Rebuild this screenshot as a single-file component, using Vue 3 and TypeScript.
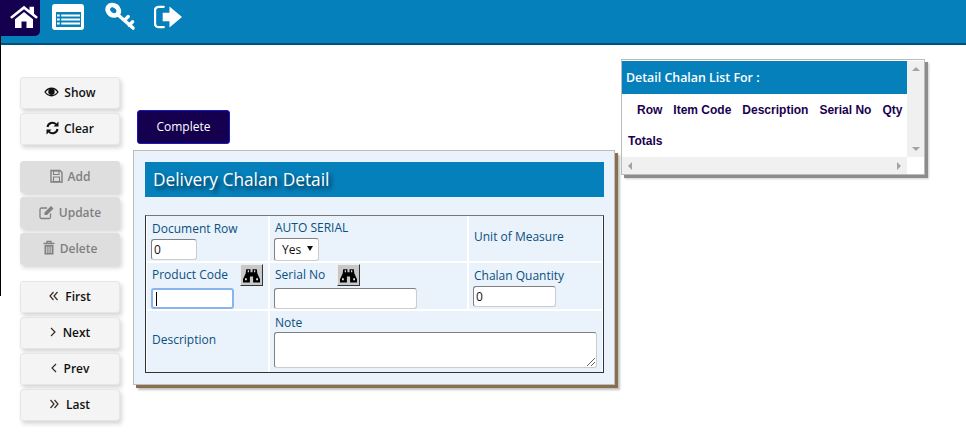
<template>
  <div class="app">
    <header class="topbar">
      <a class="nav-item home">
        <svg viewBox="0 0 30 26" width="30" height="24" preserveAspectRatio="none">
          <path d="M1 14 15 2l5.500 4.700V3h4.500v7.600L29 14l-1.800 2L15 5.600 2.800 16z" fill="#fff" />
          <path d="M6 16.500 15 8.800l9 7.700V26h-6.500v-7h-5v7H6z" fill="#fff" />
        </svg>
      </a>
      <a class="nav-item list">
        <svg viewBox="0 0 32 26" width="32" height="26">
          <rect x="0" y="0" width="32" height="26" rx="3" fill="#fff" />
          <rect x="4" y="8" width="25" height="15" fill="#0680bb" />
          <path d="M5 11.500h23M5 15.500h23M5 19.500h23" stroke="#fff" stroke-width="2" />
          <path d="M8.500 9v13" stroke="#0680bb" stroke-width="1.500" />
        </svg>
      </a>
      <a class="nav-item key">
        <svg viewBox="0 0 32 30" width="31" height="29">
          <ellipse cx="8.500" cy="8.500" rx="6" ry="5" transform="rotate(35 8.500 8.500)" fill="none" stroke="#fff" stroke-width="5" />
          <path d="M13 13 29 27M20 19l4-4M25 24l3.500-3.500" fill="none" stroke="#fff" stroke-width="3.500" stroke-linecap="round" />
        </svg>
      </a>
      <a class="nav-item exit">
        <svg viewBox="0 0 30 26" width="29" height="24" preserveAspectRatio="none">
          <path d="M10 2H5a4 4 0 0 0-4 4v14a4 4 0 0 0 4 4h5" fill="none" stroke="#fff" stroke-width="2.500" stroke-linecap="round" />
          <path d="M9 8.500h7V1.500L29 13 16 24.500v-7H9z" fill="#fff" />
        </svg>
      </a>
    </header>

    <div class="page">
      <aside class="sidebar">
        <div v-for="(group, i) in buttonGroups" :key="i" class="btn-group">
          <button
            v-for="btn in group"
            :key="btn.label"
            class="side-btn"
            :class="{ disabled: btn.disabled, pager: btn.pager }"
          >
            <svg
              :viewBox="`0 0 ${btn.w} 16`"
              :width="btn.w"
              height="16"
              class="side-icon"
              v-html="btn.icon"
            ></svg>
            <span>{{ btn.label }}</span>
          </button>
        </div>
      </aside>

      <main class="center">
        <button class="complete-btn">Complete</button>
        <section class="detail-panel">
          <h2 class="detail-title">Delivery Chalan Detail</h2>
          <div class="form-grid">
            <div class="cell">
              <label>Document Row</label>
              <input class="field doc-row" value="0" />
            </div>
            <div class="cell">
              <label class="tight">AUTO SERIAL</label>
              <div class="select-box">Yes <span class="caret"></span></div>
            </div>
            <div class="cell middle">
              <label>Unit of Measure</label>
            </div>

            <div class="cell row-two">
              <div class="label-row">
                <label>Product Code</label>
                <button class="search-btn">
                  <svg viewBox="0 0 16 14" width="17" height="15" v-html="binoculars"></svg>
                </button>
              </div>
              <div class="field product focused"><span class="cursor"></span></div>
            </div>
            <div class="cell row-two">
              <div class="label-row serial">
                <label>Serial No</label>
                <button class="search-btn">
                  <svg viewBox="0 0 16 14" width="17" height="15" v-html="binoculars"></svg>
                </button>
              </div>
              <input class="field serial-input" />
            </div>
            <div class="cell">
              <label>Chalan Quantity</label>
              <input class="field qty" value="0" />
            </div>

            <div class="cell middle">
              <label>Description</label>
            </div>
            <div class="cell note-cell">
              <label>Note</label>
              <div class="note-box">
                <svg class="grip" viewBox="0 0 9 9" width="9" height="9">
                  <path d="M1 9 9 1M5 9l4-4" stroke="#666" stroke-width="1" />
                </svg>
              </div>
            </div>
          </div>
        </section>
      </main>

      <section class="list-panel">
        <div class="list-view">
          <div class="list-body">
            <div class="list-title">Detail Chalan List For :</div>
            <div class="list-head">
              <span v-for="col in columns" :key="col">{{ col }}</span>
            </div>
            <div class="list-total">Totals</div>
          </div>
          <div class="vbar">
            <span class="arrow up"></span>
            <span class="arrow down"></span>
          </div>
        </div>
        <div class="hbar">
          <span class="arrow left"></span>
          <span class="arrow right"></span>
        </div>
      </section>
    </div>
  </div>
</template>

<script setup lang="ts">
interface SideButton {
  label: string
  icon: string
  w: number
  disabled?: boolean
  pager?: boolean
}

const chevron = (d: string) =>
  `<path d="${d}" fill="none" stroke="#3a2a20" stroke-width="1.200" />`

const buttonGroups: SideButton[][] = [
  [
    {
      label: 'Show',
      w: 15,
      icon: '<path d="M1 8c3.500-5 9.500-5 13 0-3.500 5-9.500 5-13 0z" fill="none" stroke="currentColor" stroke-width="1.300"/><circle cx="7.500" cy="7.800" r="3.200" fill="currentColor"/>'
    },
    {
      label: 'Clear',
      w: 13,
      icon: '<path d="M1.500 7A5 5 0 0 1 10 4.200M11.500 9A5 5 0 0 1 3 11.800" fill="none" stroke="currentColor" stroke-width="2"/><path d="M12.500 1.500v5h-5zM.500 14.500v-5h5z" fill="currentColor"/>'
    }
  ],
  [
    {
      label: 'Add',
      w: 13,
      disabled: true,
      icon: '<path d="M1 2.500h9l2 2v9.500H1z" fill="none" stroke="currentColor" stroke-width="1.400"/><path d="M3.500 3h5.500v3.500H3.500zM3.500 9h6v4.500h-6z" fill="none" stroke="currentColor" stroke-width="1.100"/>'
    },
    {
      label: 'Update',
      w: 15,
      disabled: true,
      icon: '<path d="M11.500 9.500V13a1.500 1.500 0 0 1-1.500 1.500H2.500A1.500 1.500 0 0 1 1 13V5.500A1.500 1.500 0 0 1 2.500 4h5.500" fill="none" stroke="currentColor" stroke-width="1.300"/><path d="M5.500 8.500 12 2l2.500 2.500L8 11H5.500z" fill="currentColor"/>'
    },
    {
      label: 'Delete',
      w: 12,
      disabled: true,
      icon: '<path d="M.500 3.500h11M4 3V1.500h4V3" fill="none" stroke="currentColor" stroke-width="1.300"/><path d="M1.500 5h9v9.500h-9z" fill="currentColor"/><path d="M3.800 6.500v6.500M6 6.500v6.500M8.200 6.500v6.500" stroke="#dedede" stroke-width="1"/>'
    }
  ],
  [
    { label: 'First', w: 9, pager: true, icon: chevron('M4.500 4 1 8l3.500 4M8.500 4 5 8l3.500 4') },
    { label: 'Next', w: 6, pager: true, icon: chevron('M1 4l4 4-4 4') },
    { label: 'Prev', w: 6, pager: true, icon: chevron('M5 4 1 8l4 4') },
    { label: 'Last', w: 9, pager: true, icon: chevron('M.500 4 4 8l-3.500 4M4.500 4 8 8l-3.500 4') }
  ]
]

const binoculars =
  '<path d="M3 1h4v3h2V1h4l.5 4 2.500 5.500v3h-6.500V8h-3v5.500H0v-3L2.500 5z" fill="#000"/><path d="M2 9.500h1.500v2H2zM12.500 9.500H14v2h-1.500zM4.500 2h1v2h-1zM10.500 2h1v2h-1z" fill="#fff"/>'

const columns = ['Row', 'Item Code', 'Description', 'Serial No', 'Qty']
</script>

<style>
html,
body {
  margin: 0;
  background: #fff;
  overflow: hidden;
}
</style>

<style scoped>
.app {
  position: relative;
  height: 445px;
  font-family: "Open Sans", "Noto Sans", sans-serif;
  font-size: 12px;
}

/* thin black line down the left edge */
.app::before {
  content: "";
  position: absolute;
  left: 0;
  top: 36px;
  width: 1px;
  height: 260px;
  background: #000;
}

.topbar {
  display: flex;
  align-items: flex-start;
  height: 43px;
  background: #0680bb;
  border-bottom: 2px solid #02507c;
}

.nav-item {
  display: flex;
  align-items: center;
  justify-content: center;
  box-sizing: border-box;
  height: 36px;
}

.home {
  position: relative;
  z-index: 1;
  width: 40px;
  justify-content: flex-end;
  padding: 0 1px 4px 0;
  background: #14004f;
  border-radius: 0 0 5px 0;
}

.list {
  margin-left: 12px;
  padding-bottom: 2px;
}

.key {
  margin-left: 21px;
  padding-bottom: 3px;
}

.exit {
  margin-left: 18px;
  padding-bottom: 3px;
}

.page {
  display: flex;
  align-items: flex-start;
  padding-left: 20px;
}

/* Sidebar */
.sidebar {
  display: flex;
  flex-direction: column;
  gap: 16px;
  width: 100px;
  padding-top: 32px;
}

.btn-group {
  display: flex;
  flex-direction: column;
  gap: 4px;
}

.side-btn {
  display: flex;
  align-items: center;
  justify-content: center;
  gap: 5px;
  box-sizing: border-box;
  width: 100px;
  height: 32px;
  padding: 0 0 2px;
  border: 1px solid #e6e6e6;
  border-radius: 3px;
  background: #f4f4f4;
  box-shadow: 2px 3px 4px rgba(0, 0, 0, 0.16);
  color: #111;
  font-family: inherit;
  font-size: 12px;
  font-weight: 600;
}

.side-btn.pager {
  gap: 7px;
}

.side-btn.disabled {
  background: #dedede;
  border-color: #dedede;
  color: #808080;
}

.side-icon {
  flex: none;
}

/* Center */
.center {
  width: 488px;
  margin-left: 13px;
  padding-top: 65px;
}

.complete-btn {
  display: block;
  width: 93px;
  height: 34px;
  margin-left: 4px;
  padding: 0 0 2px;
  border: 1px solid #1a17c8;
  border-radius: 3px;
  background: #14004f;
  color: #fff;
  font-family: inherit;
  font-size: 12px;
}

.detail-panel {
  box-sizing: border-box;
  width: 482px;
  height: 235px;
  margin-top: 6px;
  padding: 11px 0 0 11px;
  background: #eaf3fb;
  border: 1px solid #bdbdbd;
  box-shadow: 3px 3px 0 #8a6f4e, 5px 5px 2px rgba(0, 0, 0, 0.25);
}

.detail-title {
  width: 459px;
  height: 35px;
  box-sizing: border-box;
  margin: 0;
  padding-left: 8px;
  background: #0680bb;
  color: #fff;
  font-size: 17.300px;
  font-weight: 400;
  line-height: 35px;
  text-shadow: 3px 3px 4px #012a44;
}

.form-grid {
  display: grid;
  grid-template-columns: 121px 197px 133px;
  grid-template-rows: 45px 46px 61px;
  gap: 2px;
  box-sizing: border-box;
  width: 459px;
  margin-top: 18px;
  padding: 0 1px;
  background: #fff;
  border: 1px solid #333;
  border-top-color: #777;
}

.cell {
  position: relative;
  padding: 3px 0 0 5px;
  background: #eaf3fb;
  color: #0a4f80;
}

.cell label {
  display: block;
  height: 17px;
  padding-top: 1px;
  font-size: 12px;
  line-height: 18px;
}

.cell label.tight {
  height: 15px;
  line-height: 16px;
}

.cell.middle {
  display: flex;
  align-items: center;
  padding-top: 0;
  padding-bottom: 6px;
}

.cell.row-two {
  padding-top: 1px;
}

.label-row {
  display: flex;
  justify-content: space-between;
  align-items: flex-start;
  width: 111px;
  height: 24px;
}

.label-row label {
  margin-top: 1px;
}

.label-row.serial {
  width: 85px;
}

.field {
  display: block;
  box-sizing: border-box;
  height: 21px;
  margin-left: -1px;
  padding: 0 2px;
  border: 1px solid #ccc;
  border-top-color: #808080;
  border-left-color: #808080;
  border-radius: 3px;
  background: #fff;
  color: #111;
  font-family: inherit;
  font-size: 12px;
  outline: none;
}

.doc-row {
  width: 46px;
  margin-top: 2px;
}

.product {
  width: 83px;
}

.focused {
  border: 2px solid #8ab4ee;
}

.cursor {
  display: block;
  width: 1px;
  height: 14px;
  margin: 2px 0 0 1px;
  background: #000;
}

.serial-input {
  width: 143px;
}

.qty {
  width: 83px;
  margin-top: 2px;
}

.select-box {
  display: flex;
  align-items: center;
  box-sizing: border-box;
  width: 45px;
  height: 23px;
  margin: 3px 0 0 -1px;
  padding-left: 7px;
  border: 1px solid #ccc;
  border-top-color: #808080;
  border-left-color: #808080;
  border-radius: 3px;
  background: #fff;
  color: #111;
  font-size: 12px;
}

.caret {
  width: 0;
  height: 0;
  margin: 0 0 2px 6px;
  border-left: 3px solid transparent;
  border-right: 3px solid transparent;
  border-top: 5px solid #111;
}

.search-btn {
  display: flex;
  align-items: center;
  justify-content: center;
  box-sizing: border-box;
  width: 23px;
  height: 22px;
  padding: 0;
  background: #c8c8c8;
  border: 1px solid;
  border-color: #eee #333 #333 #eee;
}

.note-cell {
  grid-column: 2 / 4;
  padding-top: 2px;
}

.note-box {
  position: relative;
  box-sizing: border-box;
  width: 323px;
  height: 36px;
  margin: 1px 0 0 -1px;
  border: 1px solid #ccc;
  border-top-color: #808080;
  border-left-color: #808080;
  border-radius: 3px;
  background: #fff;
}

.grip {
  position: absolute;
  right: 1px;
  bottom: 1px;
}

/* List panel */
.list-panel {
  box-sizing: border-box;
  width: 304px;
  height: 116px;
  margin-top: 14px;
  border: 1px solid #bbb;
  background: #fff;
  box-shadow: 3px 3px 0 #8c8c8c, 4px 4px 2px rgba(0, 0, 0, 0.2);
}

.list-view {
  display: flex;
  height: 96px;
  margin-top: 1px;
}

.list-body {
  width: 285px;
  font-family: "Liberation Sans", Arial, sans-serif;
  color: #1a0050;
}

.list-title {
  height: 33px;
  padding-left: 4px;
  background: #0680bb;
  color: #fff;
  font-family: "Open Sans", "Noto Sans", sans-serif;
  font-size: 12.400px;
  font-weight: 600;
  line-height: 33px;
}

.list-head {
  display: flex;
  gap: 11px;
  padding: 9px 0 0 15px;
  font-size: 12px;
  font-weight: 700;
  line-height: 14px;
  white-space: nowrap;
}

.list-total {
  padding: 17px 0 0 6px;
  font-size: 12px;
  font-weight: 700;
  line-height: 14px;
}

.vbar {
  display: flex;
  flex-direction: column;
  justify-content: space-between;
  align-items: center;
  box-sizing: border-box;
  width: 17px;
  padding: 6px 0;
  background: #f0f0f0;
}

.hbar {
  display: flex;
  justify-content: space-between;
  align-items: center;
  box-sizing: border-box;
  width: 285px;
  height: 17px;
  padding: 0 6px;
  background: #f0f0f0;
}

.arrow {
  width: 0;
  height: 0;
  border: 4px solid transparent;
}

.arrow.up {
  border-top: 0;
  border-bottom-color: #a3a3a3;
}

.arrow.down {
  border-bottom: 0;
  border-top-color: #a3a3a3;
}

.arrow.left {
  border-left: 0;
  border-right-color: #a3a3a3;
}

.arrow.right {
  border-right: 0;
  border-left-color: #a3a3a3;
}
</style>
